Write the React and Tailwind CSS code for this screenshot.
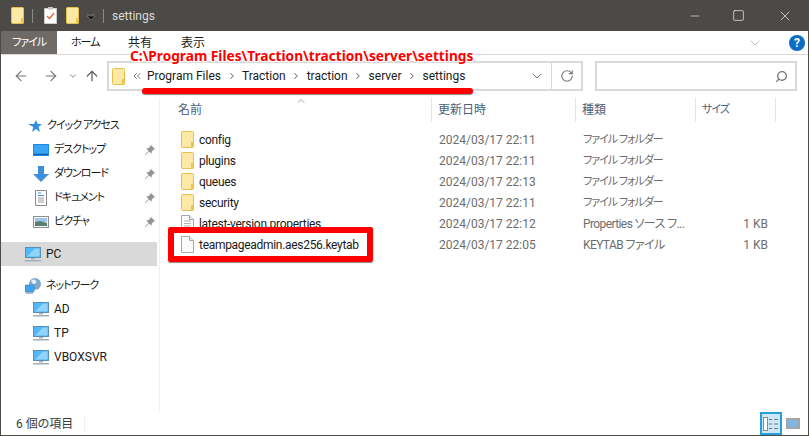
import { ArrowLeft, ArrowRight, ArrowUp, ChevronDown, ChevronRight, ChevronUp, ChevronsLeft, Minus, RotateCw, Search, Square, X } from 'lucide-react'

const jp = "font-['Roboto','Noto_Sans_CJK_JP',sans-serif] [font-feature-settings:'palt']"
const kana = 'text-[11px] tracking-[-1px]'

function Folder({ className = '' }) {
  return (
    <svg viewBox="0 0 13 17" className={`w-[13px] h-[17px] shrink-0 ${className}`}>
      <rect x="0.5" y="0.5" width="12" height="16" rx="1" fill="#fde8a6" stroke="#e6c04e" />
      <rect x="10" y="11" width="2.5" height="5.5" fill="#eec64e" />
    </svg>
  )
}

function FileIcon({ lines }) {
  return (
    <svg viewBox="0 0 13 17" className="w-[13px] h-[17px] shrink-0">
      <path d="M.5.5h8l4 4v12H.5z" fill="#fafafa" stroke="#a8a8a8" />
      <path d="M8.5.5v4h4" fill="#eee" stroke="#a8a8a8" />
      {lines && <path d="M3 6h7M3 8.5h7M3 11h7M3 13.5h7" stroke="#b5b5b5" />}
    </svg>
  )
}

function Pin() {
  return (
    <svg viewBox="0 0 12 12" className="w-3 h-3 shrink-0">
      <path d="M7 1l4 4-1.2.6-2 2-.3 2.2L5 7.4 1.5 11 1 10.5 4.5 7 2.2 4.5l2.2-.3 2-2z" fill="#8f9499" />
    </svg>
  )
}

function Monitor() {
  return (
    <svg viewBox="0 0 16 15" className="w-4 h-[15px] shrink-0">
      <rect x="0.5" y="0.5" width="15" height="10" fill="#52b8f7" stroke="#5b8fb2" />
      <path d="M2 9.5L10 1.5h4.5v8z" fill="#8ed4fb" />
      <path d="M6 11h4v1.5H6z" fill="#a9b5bf" />
      <path d="M0 13h16v1.5H0z" fill="#a3afba" />
    </svg>
  )
}

function SideIcon({ kind }) {
  if (kind === 'desk') return (
    <svg viewBox="0 0 16 12" className="w-4 h-3 shrink-0">
      <rect width="16" height="12" fill="#1e88e5" />
      <rect x="1" y="1" width="14" height="8.5" fill="#3aa4f5" />
      <rect x="1" y="10" width="14" height="1" fill="#0f5fa8" />
    </svg>
  )
  if (kind === 'down') return (
    <svg viewBox="0 0 16 16" className="w-4 h-4 shrink-0">
      <path d="M5 0h6v8h5l-8 8-8-8h5z" fill="#3d8fdc" />
    </svg>
  )
  if (kind === 'doc') return (
    <svg viewBox="0 0 16 16" className="w-4 h-4 shrink-0">
      <path d="M2.5.5h11v15h-11z" fill="#fff" stroke="#8a8a8a" />
      <path d="M5 3h3M5 5.5h6" stroke="#3d8fdc" />
      <path d="M5 8h6M5 10h6M5 12h6" stroke="#9a9a9a" />
    </svg>
  )
  return (
    <svg viewBox="0 0 16 12" className="w-4 h-3 shrink-0">
      <rect x="0.5" y="0.5" width="15" height="11" fill="#f4f4f4" stroke="#8f8f8f" />
      <rect x="2" y="2" width="12" height="4" fill="#9cc7ea" />
      <path d="M2 6l5-1 7 2v3H2z" fill="#5b7f6e" />
    </svg>
  )
}

const quick = [
  ['デスクトップ', 'desk'],
  ['ダウンロード', 'down'],
  ['ドキュメント', 'doc'],
  ['ピクチャ', 'pic'],
]

const files = [
  ['config', '2024/03/17 22:11', 'ファイル フォルダー', ''],
  ['plugins', '2024/03/17 22:11', 'ファイル フォルダー', ''],
  ['queues', '2024/03/17 22:13', 'ファイル フォルダー', ''],
  ['security', '2024/03/17 22:11', 'ファイル フォルダー', ''],
  ['latest-version.properties', '2024/03/17 22:12', 'Properties ソース フ...', '1 KB'],
  ['teampageadmin.aes256.keytab', '2024/03/17 22:05', 'KEYTAB ファイル', '1 KB'],
]

const crumbs = ['Traction', 'traction', 'server', 'settings']

export default function App() {
  return (
    <div className={`relative w-[809px] h-[436px] overflow-hidden flex flex-col bg-white border-x border-b border-[#4b4a47] text-[12px] leading-4 text-[#1a1a1a] ${jp}`}>
      {/* title bar */}
      <div className="h-[31px] -mx-px bg-[#4b4a47] flex items-center shrink-0 pl-[11px]">
        <Folder />
        <div className="w-px h-3.5 bg-[#8a8987] ml-2" />
        <svg viewBox="0 0 13 17" className="w-[13px] h-[17px] ml-[11px]">
          <path d="M.5 1.5h12v15H.5z" fill="#fff" stroke="#ccc" />
          <rect x="4" y="0" width="5" height="2.5" fill="#c9c9c9" />
          <path d="M3 9l2.5 2.5L10 6" fill="none" stroke="#e8632a" strokeWidth="1.2" />
        </svg>
        <Folder className="ml-[9px]" />
        <svg viewBox="0 0 8 8" className="w-2 h-2 ml-2 mt-0.5">
          <path d="M0 0h8v1H0zM0 3h8L4 7z" fill="#111" stroke="#ddd" strokeWidth="0.3" />
        </svg>
        <div className="w-px h-3.5 bg-[#8a8987] ml-2" />
        <span className="ml-2 text-[#dcdcdc]">settings</span>
        <div className="ml-auto flex items-center text-white">
          <Minus className="w-3.5 h-3.5 mr-[30px]" strokeWidth={1} />
          <Square className="w-[13px] h-[13px] mr-[32px]" strokeWidth={1.2} />
          <X className="w-4 h-4 mr-[16px]" strokeWidth={1} />
        </div>
      </div>

      {/* ribbon tabs */}
      <div className="h-[24px] flex items-center shrink-0 border-b border-[#d9d9d9]">
        <div className={`w-[56px] h-[23px] bg-[#6e6a67] text-white flex items-center justify-center ${kana}`}>ファイル</div>
        <span className={`ml-[14px] w-[57px] ${kana}`}>ホーム</span>
        <span className="w-[53px]">共有</span>
        <span>表示</span>
        <ChevronDown className="ml-auto mr-[26px] w-4 h-4 text-[#a0a0a0]" strokeWidth={1} />
        <div className="w-4 h-4 mr-[3px] rounded-full bg-[#0a6cc4] text-white text-[12px] font-bold flex items-center justify-center">?</div>
      </div>

      {/* nav row */}
      <div className="h-[43px] flex items-start pt-[6px] shrink-0">
        <div className="w-[106px] h-[29px] flex items-center pl-[12px] text-[#7a7a7a] shrink-0">
          <ArrowLeft className="w-4 h-4" strokeWidth={1.8} />
          <ArrowRight className="w-4 h-4 ml-[14px]" strokeWidth={1.8} />
          <ChevronDown className="w-2.5 h-2.5 ml-[9px]" strokeWidth={2} />
          <ArrowUp className="w-4 h-4 ml-[6px] text-[#666]" strokeWidth={2} />
        </div>
        <div className="w-[445px] h-[30px] border-2 border-r border-[#d9d9d9] flex items-center pl-[3px] shrink-0">
          <Folder />
          <ChevronsLeft className="w-3 h-3 ml-[6px] text-[#777]" />
          <span className="ml-[4px]">Program Files</span>
          {crumbs.map(c => (
            <div key={c} className="flex items-center">
              <div className="w-[21px] flex justify-center">
                <ChevronRight className="w-2.5 h-2.5 text-[#777]" strokeWidth={2.5} />
              </div>
              <span>{c}</span>
            </div>
          ))}
          <ChevronDown className="ml-auto mr-[6px] w-4 h-4 text-[#777]" strokeWidth={1.5} />
        </div>
        <div className="w-[31px] h-[30px] border-2 border-l-0 border-[#d9d9d9] flex items-center justify-center shrink-0">
          <RotateCw className="w-3.5 h-3.5 text-[#777]" strokeWidth={2} />
        </div>
        <div className="ml-[12px] w-[202px] h-[30px] border-2 border-[#d9d9d9] flex items-center justify-end pr-[7px] shrink-0">
          <Search className="w-[13px] h-[13px] -scale-x-100 text-[#777]" strokeWidth={2.5} />
        </div>
      </div>

      {/* main */}
      <div className="flex-1 flex min-h-0">
        {/* sidebar */}
        <div className="w-[159px] shrink-0 border-r border-[#f0f0f0] pt-[16px]">
          <div className="h-[24px] flex items-center pl-[27px]">
            <svg viewBox="0 0 14 14" className="w-3.5 h-3.5 shrink-0">
              <path d="M8 1l1.6 4H14l-3.4 2.8L12 13 8 10l-4 3 1.3-5L0 5h6z" fill="#2f8fe0" />
            </svg>
            <span className={`ml-[5px] ${kana}`}>クイック アクセス</span>
          </div>
          {quick.map(([label, kind]) => (
            <div key={label} className="h-[24px] flex items-center">
              <div className="w-[32px]" />
              <div className="w-4 flex justify-center"><SideIcon kind={kind} /></div>
              <span className={`ml-[5px] ${kana}`}>{label}</span>
              <div className="ml-auto mr-[3px]"><Pin /></div>
            </div>
          ))}
          <div className="h-[24px] mr-[2px] bg-[#d9d9d9] flex items-center pl-[24px] mt-[8px]">
            <Monitor />
            <span className="ml-[5px]">PC</span>
          </div>
          <div className="h-[23px] flex items-center pl-[24px] mt-[8px]">
            <svg viewBox="0 0 16 16" className="w-4 h-4 shrink-0">
              <circle cx="10" cy="6" r="6" fill="#7fa8cc" />
              <path d="M6 3c2-2 4-2 5 0s-1 3-3 3z" fill="#e6f0f8" />
              <rect x="0" y="7" width="9" height="7" fill="#3aa4f5" stroke="#4d84ad" strokeWidth="0.6" />
              <path d="M1 15h7" stroke="#8aa0b2" strokeWidth="1.4" />
            </svg>
            <span className={`ml-[5px] ${kana}`}>ネットワーク</span>
          </div>
          {['AD', 'TP', 'VBOXSVR'].map(n => (
            <div key={n} className="h-[24px] flex items-center pl-[32px]">
              <Monitor />
              <span className="ml-[5px]">{n}</span>
            </div>
          ))}
        </div>

        {/* file list */}
        <div className="flex-1 min-w-0 relative">
          <ChevronUp className="absolute left-[135px] top-[-3px] w-3 h-3 text-[#8a8a8a]" strokeWidth={1.5} />
          <div className="h-[24px] flex items-center text-[#4c607a]">
            <div className="w-[272px] h-full pl-[18px] flex items-center border-r border-[#e5e5e5]">名前</div>
            <div className="w-[144px] h-full pl-[6px] flex items-center border-r border-[#e5e5e5]">更新日時</div>
            <div className="w-[120px] h-full pl-[6px] flex items-center border-r border-[#e5e5e5]">種類</div>
            <div className={`w-[80px] h-full pl-[6px] flex items-center border-r border-[#e5e5e5] ${kana}`}>サイズ</div>
          </div>
          <div className="pt-[7px]">
            {files.map(([name, date, type, size], i) => (
              <div key={name} className="h-[21px] flex items-center">
                <div className="w-[272px] pl-[21px] flex items-center">
                  {i < 4 ? <Folder /> : <FileIcon lines={i === 4} />}
                  <span className="ml-[5px] tracking-[-0.3px]">{name}</span>
                </div>
                <span className="w-[144px] pl-[7px] text-[#6d6d6d]">{date}</span>
                <span className={`w-[120px] pl-[7px] text-[#6d6d6d] whitespace-nowrap ${i < 4 ? kana : 'tracking-[-0.6px]'}`}>{type}</span>
                <span className="w-[72px] text-right text-[#6d6d6d]">{size}</span>
              </div>
            ))}
          </div>
        </div>
      </div>

      {/* status bar */}
      <div className="h-[23px] shrink-0 flex items-center pl-[15px] text-[#3b3b3b]">
        <span>6 個の項目</span>
        <div className="w-px h-4 bg-[#efefef] ml-[11px]" />
        <div className="ml-auto flex items-center mr-[8px]">
          <div className="w-[22px] h-[23px] bg-[#cce8f6] border-2 border-[#26a0da] flex items-center justify-center">
            <svg viewBox="0 0 16 14" className="w-4 h-3.5">
              <rect x="0.5" y="0.5" width="4" height="13" fill="#fff" stroke="#888" />
              <path d="M6 2.5h3M11 2.5h4M6 7h3M11 7h4M6 11.5h3M11 11.5h4" stroke="#777" />
            </svg>
          </div>
          <div className="ml-[4px] w-[14px] h-[11px] border-2 border-[#a5a5a5] bg-[#7eb7e3]" />
        </div>
      </div>

      {/* annotations */}
      <div className="absolute left-[129px] top-[46px] text-[13.7px] leading-5 font-bold text-[#ff0000] whitespace-nowrap font-['Noto_Sans',sans-serif] [text-shadow:1px_1px_1px_#fff,-1px_-1px_1px_#fff,1px_-1px_1px_#fff,-1px_1px_1px_#fff]">
        C:\Program Files\Traction\traction\server\settings
      </div>
      <div className="absolute left-[141px] top-[88px] w-[331px] h-[6px] rounded-full bg-[#ff0000] shadow-[0_1px_1px_#888]" />
      <div className="absolute left-[167px] top-[227px] w-[205px] h-[35px] border-[6px] border-[#ff0000] rounded-[2px] shadow-[0_1px_1px_#888]" />
    </div>
  )
}
